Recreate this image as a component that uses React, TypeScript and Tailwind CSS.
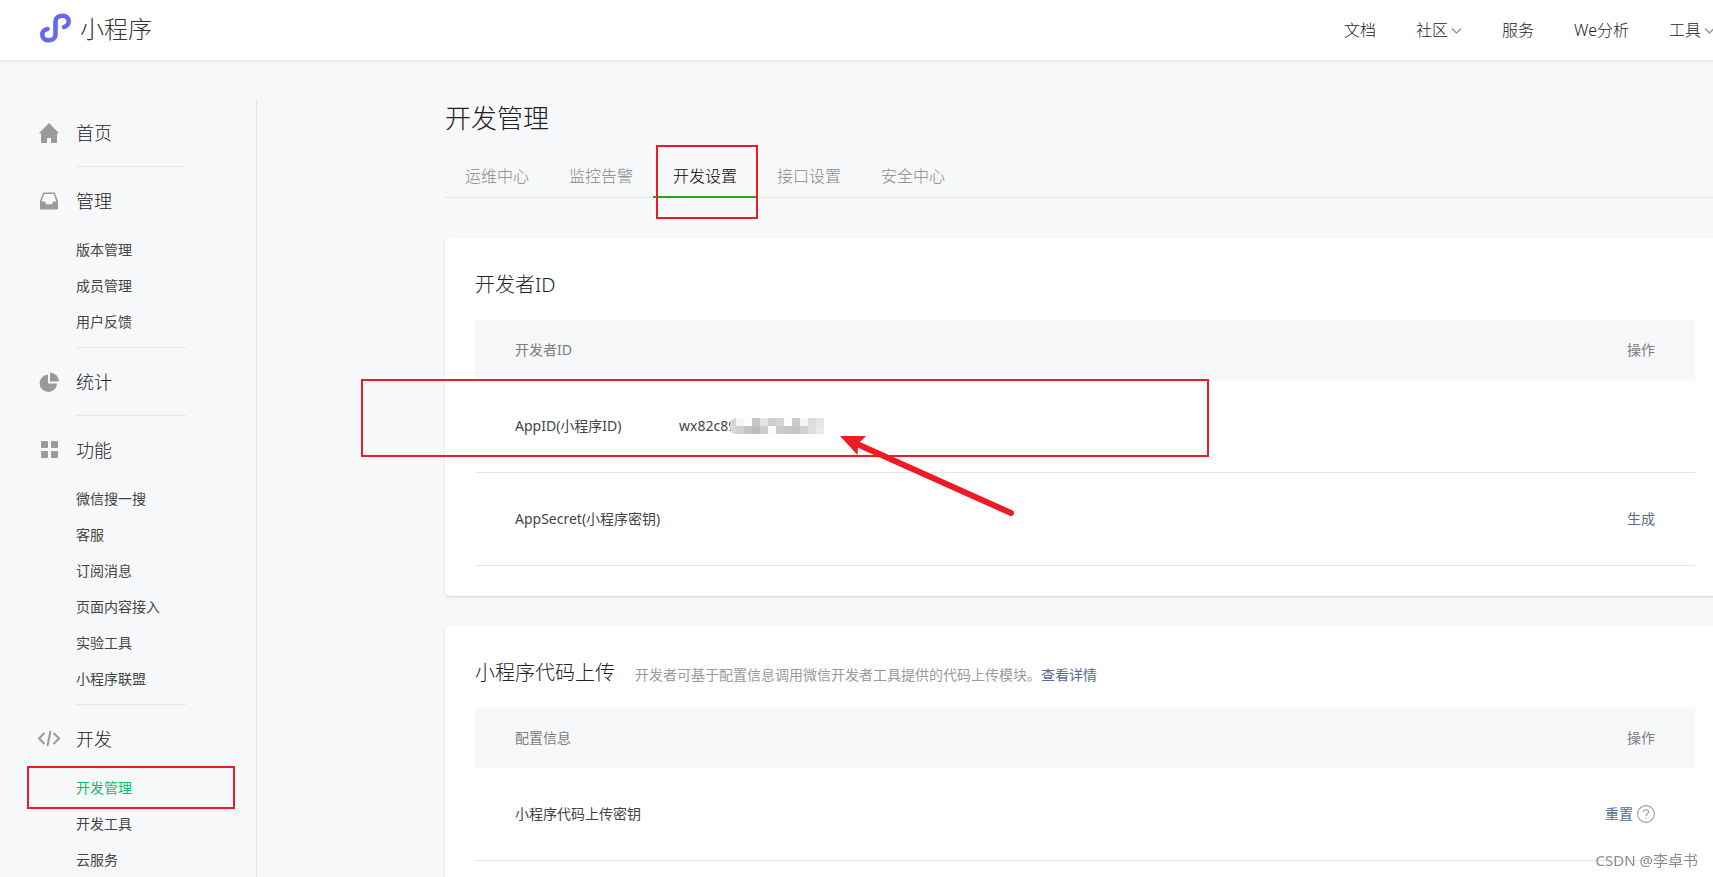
import React, { useState } from 'react';

const menu = [
  { title: '首页', icon: 'home', items: [] },
  { title: '管理', icon: 'inbox', items: ['版本管理', '成员管理', '用户反馈'] },
  { title: '统计', icon: 'pie', items: [] },
  {
    title: '功能',
    icon: 'grid',
    items: ['微信搜一搜', '客服', '订阅消息', '页面内容接入', '实验工具', '小程序联盟'],
  },
  { title: '开发', icon: 'code', items: ['开发管理', '开发工具', '云服务'] },
];

const navLinks = [
  { label: '文档', more: false },
  { label: '社区', more: true },
  { label: '服务', more: false },
  { label: 'We分析', more: false },
  { label: '工具', more: true },
];

const tabs = ['运维中心', '监控告警', '开发设置', '接口设置', '安全中心'];

// Two rows of blocks that cover the rest of the AppID
const mosaic = [
  ['#d4d4d4', '#f6f6f6', '#fefefe', '#c6c6c6', '#e4e4e4', '#cfcfcf', '#d6d6d6', '#fefefe', '#cacaca', '#f6f6f6', '#dcdcdc', '#e5e5e5'],
  ['#d6d6d6', '#d2d2d2', '#c5c5c5', '#bdbdbd', '#cccccc', '#fbfbfb', '#cacaca', '#c8c8c8', '#c4c4c4', '#d0d0d0', '#dedede', '#e9e9e9'],
];

const MenuIcon = ({ name }: { name: string }) => {
  return (
    <svg className="w-[22px] h-[22px]" viewBox="0 0 22 22" fill="#9a9a9a">
      {name === 'home' && (
        <path d="M11 1 21.2 11.6H19V20.2a.8.8 0 0 1-.8.8H13V16H9v5H3.800a.8.8 0 0 1-.8-.8V11.600H.8z" />
      )}
      {name === 'inbox' && (
        <path
          fillRule="evenodd"
          d="M5.200 2.500H16.800L20 11V18.700a.8.8 0 0 1-.8.8H2.800a.8.8 0 0 1-.8-.8V11zM6.200 4 3.600 11.500H7l1 2.700h6l1-2.700h3.400L15.800 4z"
        />
      )}
      {name === 'pie' && (
        <>
          <path d="M10 3.500V12.500H19A8.700 8.700 0 1 1 10 3.500z" />
          <path d="M12 1.500A9 9 0 0 1 21 10.500H12z" />
        </>
      )}
      {name === 'grid' && (
        <>
          <rect x="3" y="2" width="7" height="7" rx="1" />
          <rect x="13" y="2" width="7" height="7" rx="1" />
          <rect x="3" y="12" width="7" height="7" rx="1" />
          <rect x="13" y="12" width="7" height="7" rx="1" />
        </>
      )}
      {name === 'code' && (
        <path
          d="M6.500 5 1 10.500 6.500 16M15.500 5 21 10.500 15.500 16M12.500 3 9.500 18"
          fill="none"
          stroke="#9a9a9a"
          strokeWidth="2"
        />
      )}
    </svg>
  );
};

const Header = () => {
  return (
    <header className="relative flex justify-between items-center h-[61px] pl-10 pr-[10px] bg-white border-b border-[#e1e4e8] shadow-[0_1px_3px_rgba(0,0,0,0.06)]">
      <a href="#" className="flex items-center gap-2 pb-[2px] text-2xl font-light text-[#353535]">
        <svg className="w-8 h-8" viewBox="0 0 32 32" fill="none" stroke="#6467f0" strokeWidth="4.6" strokeLinecap="round">
          <path d="M7.500 16C4.500 16.500 2.300 18.800 2.300 21.500C2.300 25 5 27.300 8.500 27.300C12.500 27.300 15.500 25 15.500 21.500V8.500C15.500 5 18.500 2.700 22.500 2.700C26 2.700 28.700 5 28.700 8.500C28.700 11.200 26.500 13.500 24 14" />
        </svg>
        小程序
      </a>
      <nav className="flex shrink-0 gap-10 text-base font-light text-[#222]">
        {navLinks.map((link) => (
          <a href="#" key={link.label} className="flex items-center gap-[3px]">
            {link.label}
            {link.more && (
              <svg className="w-[11px] h-[11px]" viewBox="0 0 11 11" fill="none" stroke="#9a9a9a" strokeWidth="1.5">
                <path d="M1 3.500 5.500 8 10 3.500" />
              </svg>
            )}
          </a>
        ))}
      </nav>
    </header>
  );
};

const Sidebar = () => {
  return (
    <aside className="w-[257px] shrink-0 border-r border-[#e4e6e9]">
      {menu.map((group, i) => (
        <section key={group.title}>
          {i > 0 && <hr className="ml-[76px] w-[110px] border-[#e4e6e9]" />}
          <h2 className="flex items-center h-8 mt-[18px] pl-[38px] gap-4 text-lg font-light text-[#222]">
            <MenuIcon name={group.icon} />
            {group.title}
          </h2>
          {group.items.length === 0 ? (
            <div className="h-[17px]"></div>
          ) : (
            <ul className="pt-[15px] pb-[7px] text-sm text-[#444]">
              {group.items.map((item) => (
                <li key={item} className="relative flex items-center h-9 pl-[76px]">
                  {item === '开发管理' ? (
                    <>
                      <a href="#" className="text-[#07c160]">{item}</a>
                      <span className="absolute left-[27px] -top-1 w-[208px] h-[43px] border-2 border-[#ed1c24]"></span>
                    </>
                  ) : (
                    <a href="#">{item}</a>
                  )}
                </li>
              ))}
            </ul>
          )}
        </section>
      ))}
    </aside>
  );
};

const Tabs = () => {
  const [active, setActive] = useState('开发设置');

  return (
    <div role="tablist" className="flex h-[43px] mt-[19px] border-b border-[#e4e6e9]">
      {tabs.map((tab) => (
        <div key={tab} className="relative">
          <button
            role="tab"
            aria-selected={tab === active}
            onClick={() => setActive(tab)}
            className={
              tab === active
                ? 'h-[43px] px-5 border-b-2 border-[#1aad19] text-base font-light text-black cursor-pointer'
                : 'h-[43px] px-5 border-b-2 border-transparent text-base font-light text-[#888] cursor-pointer'
            }
          >
            {tab}
          </button>
          {tab === '开发设置' && (
            <span className="absolute left-[3px] -top-[10px] w-[102px] h-[74px] border-2 border-[#ed1c24] pointer-events-none"></span>
          )}
        </div>
      ))}
    </div>
  );
};

const App = () => {
  return (
    <div className="h-screen overflow-hidden bg-[#f7f8fa] font-['Noto_Sans','Noto_Sans_CJK_SC',sans-serif]">
      <div className="-mr-3">
        <Header />
        <div className="flex pt-[38px]">
          <Sidebar />
          <main className="flex-1 ml-[188px] pt-px">
            <h1 className="h-9 text-[26px] leading-9 font-light text-[#222]">开发管理</h1>
            <Tabs />

            <section className="mt-10 px-[30px] pt-8 pb-[30px] bg-white rounded shadow-[0_1px_2px_rgba(0,0,0,0.15)]">
              <h2 className="h-[30px] text-xl leading-[30px] font-light text-[#222]">开发者ID</h2>
              <div className="relative mt-5">
                <table className="w-full border-separate border-spacing-0 text-sm text-left text-[#444]">
                  <thead>
                    <tr className="h-[60px] bg-[#f7f8fa] text-[#7d7d7d]">
                      <th className="w-[204px] pl-10 font-normal">开发者ID</th>
                      <th></th>
                      <th className="pr-10 font-normal text-right">操作</th>
                    </tr>
                  </thead>
                  <tbody className="[&_td]:border-b [&_td]:border-[#e4e6e9]">
                    <tr className="h-[93px]">
                      <td className="pl-10">AppID(小程序ID)</td>
                      <td>
                        <div className="relative">
                          wx82c89
                          <div className="absolute left-[51px] top-[2px] grid grid-cols-[6px_repeat(11,8px)] rounded-l-md overflow-hidden">
                            {mosaic.flat().map((color, i) => (
                              <span key={i} className="h-2" style={{ backgroundColor: color }}></span>
                            ))}
                          </div>
                        </div>
                      </td>
                      <td></td>
                    </tr>
                    <tr className="h-[93px]">
                      <td className="pl-10">AppSecret(小程序密钥)</td>
                      <td></td>
                      <td className="pr-10 text-right">
                        <a href="#" className="text-[#576b95]">生成</a>
                      </td>
                    </tr>
                  </tbody>
                </table>
                <div className="absolute -left-[114px] top-[59px] w-[848px] h-[78px] border-2 border-[#ed1c24] pointer-events-none"></div>
                <svg className="absolute left-[365px] top-[115px] w-[175px] h-[84px] pointer-events-none" viewBox="0 0 175 84">
                  <path d="M0 1H26L20 7 18 12 17.500 20z" fill="#ed1c24" />
                  <path d="M17 9 171 78" fill="none" stroke="#ed1c24" strokeWidth="6" strokeLinecap="round" />
                </svg>
              </div>
            </section>

            <section className="mt-[30px] px-[30px] pt-8 pb-[30px] bg-white rounded shadow-[0_1px_2px_rgba(0,0,0,0.15)]">
              <div className="flex items-baseline gap-5 h-[30px]">
                <h2 className="text-xl leading-[30px] font-light text-[#222]">小程序代码上传</h2>
                <p className="text-sm text-[#9a9a9a]">
                  开发者可基于配置信息调用微信开发者工具提供的代码上传模块。
                  <a href="#" className="text-[#576b95]">查看详情</a>
                </p>
              </div>
              <table className="w-full mt-5 border-separate border-spacing-0 text-sm text-left text-[#444]">
                <thead>
                  <tr className="h-[60px] bg-[#f7f8fa] text-[#7d7d7d]">
                    <th className="pl-10 font-normal">配置信息</th>
                    <th className="pr-10 font-normal text-right">操作</th>
                  </tr>
                </thead>
                <tbody className="[&_td]:border-b [&_td]:border-[#e4e6e9]">
                  <tr className="h-[93px]">
                    <td className="pl-10">小程序代码上传密钥</td>
                    <td className="pr-10">
                      <div className="flex justify-end items-center gap-1">
                        <a href="#" className="text-[#576b95]">重置</a>
                        <svg className="w-[18px] h-[18px]" viewBox="0 0 18 18" fill="none" stroke="#9a9a9a" strokeWidth="1.1">
                          <circle cx="9" cy="9" r="8.4" />
                          <path d="M6.500 7C6.500 5.500 7.500 4.700 9 4.700C10.500 4.700 11.500 5.600 11.500 6.900C11.500 8.700 9 8.800 9 11M9 12.400V13.700" />
                        </svg>
                      </div>
                    </td>
                  </tr>
                </tbody>
              </table>
            </section>
          </main>
        </div>
      </div>
      <p className="fixed right-[15px] bottom-[6px] text-[15px] leading-[22px] text-[#8c8c8c]">CSDN @李卓书</p>
    </div>
  );
};

export default App;
